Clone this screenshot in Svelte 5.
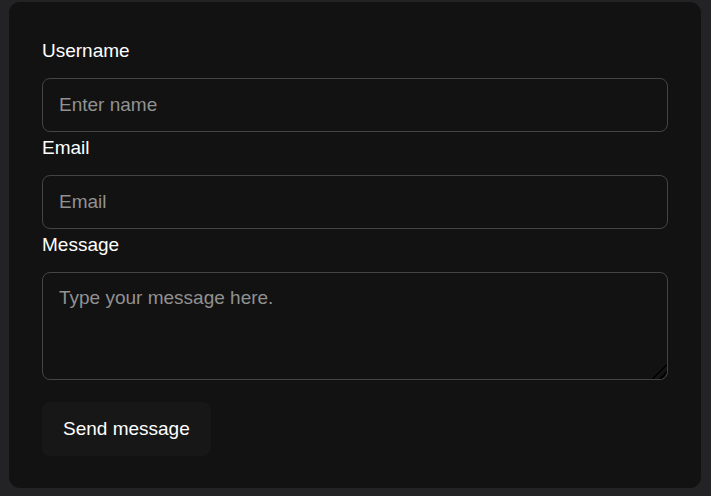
<script>
  let username = $state('');
  let email = $state('');
  let message = $state('');

  function submit(event) {
    event.preventDefault();
  }
</script>

<main>
  <form onsubmit={submit}>
    <label for="username">Username</label>
    <input id="username" type="text" placeholder="Enter name" bind:value={username} />

    <label for="email">Email</label>
    <input id="email" type="email" placeholder="Email" bind:value={email} />

    <label for="message">Message</label>
    <textarea id="message" placeholder="Type your message here." bind:value={message}></textarea>

    <button type="submit">Send message</button>
  </form>
</main>

<style>
  :global(body) {
    margin: 0;
    background: #232325;
  }

  main {
    padding: 2px 10px 8px 9px;
    font-family: 'Liberation Sans', Arial, sans-serif;
    font-size: 19px;
  }

  form {
    display: flex;
    flex-direction: column;
    padding: 33px 33px 32px;
    border-radius: 11px;
    background: #121212;
  }

  label {
    margin-bottom: 11px;
    line-height: 32px;
    color: #fff;
  }

  input,
  textarea {
    box-sizing: border-box;
    width: 100%;
    margin: 0;
    padding: 10px 16px;
    border: 1px solid #444;
    border-radius: 8px;
    outline: none;
    background: transparent;
    color: #fff;
    font: inherit;
    line-height: 30px;
  }

  input {
    height: 54px;
  }

  textarea {
    display: block;
    height: 108px;
    resize: vertical;
  }

  /* dark diagonal grip in the corner */
  textarea::-webkit-resizer {
    background: linear-gradient(
      135deg,
      transparent 0 48%,
      #000 48% 56%,
      transparent 56% 72%,
      #000 72% 80%,
      transparent 80%
    );
  }

  input::placeholder,
  textarea::placeholder {
    color: #919191;
    opacity: 1;
  }

  input:focus,
  textarea:focus {
    border-color: #777;
  }

  button {
    align-self: flex-start;
    height: 54px;
    margin-top: 22px;
    padding: 0 21px;
    border: 0;
    border-radius: 8px;
    background: #171717;
    color: #fff;
    font: inherit;
    cursor: pointer;
  }
</style>
